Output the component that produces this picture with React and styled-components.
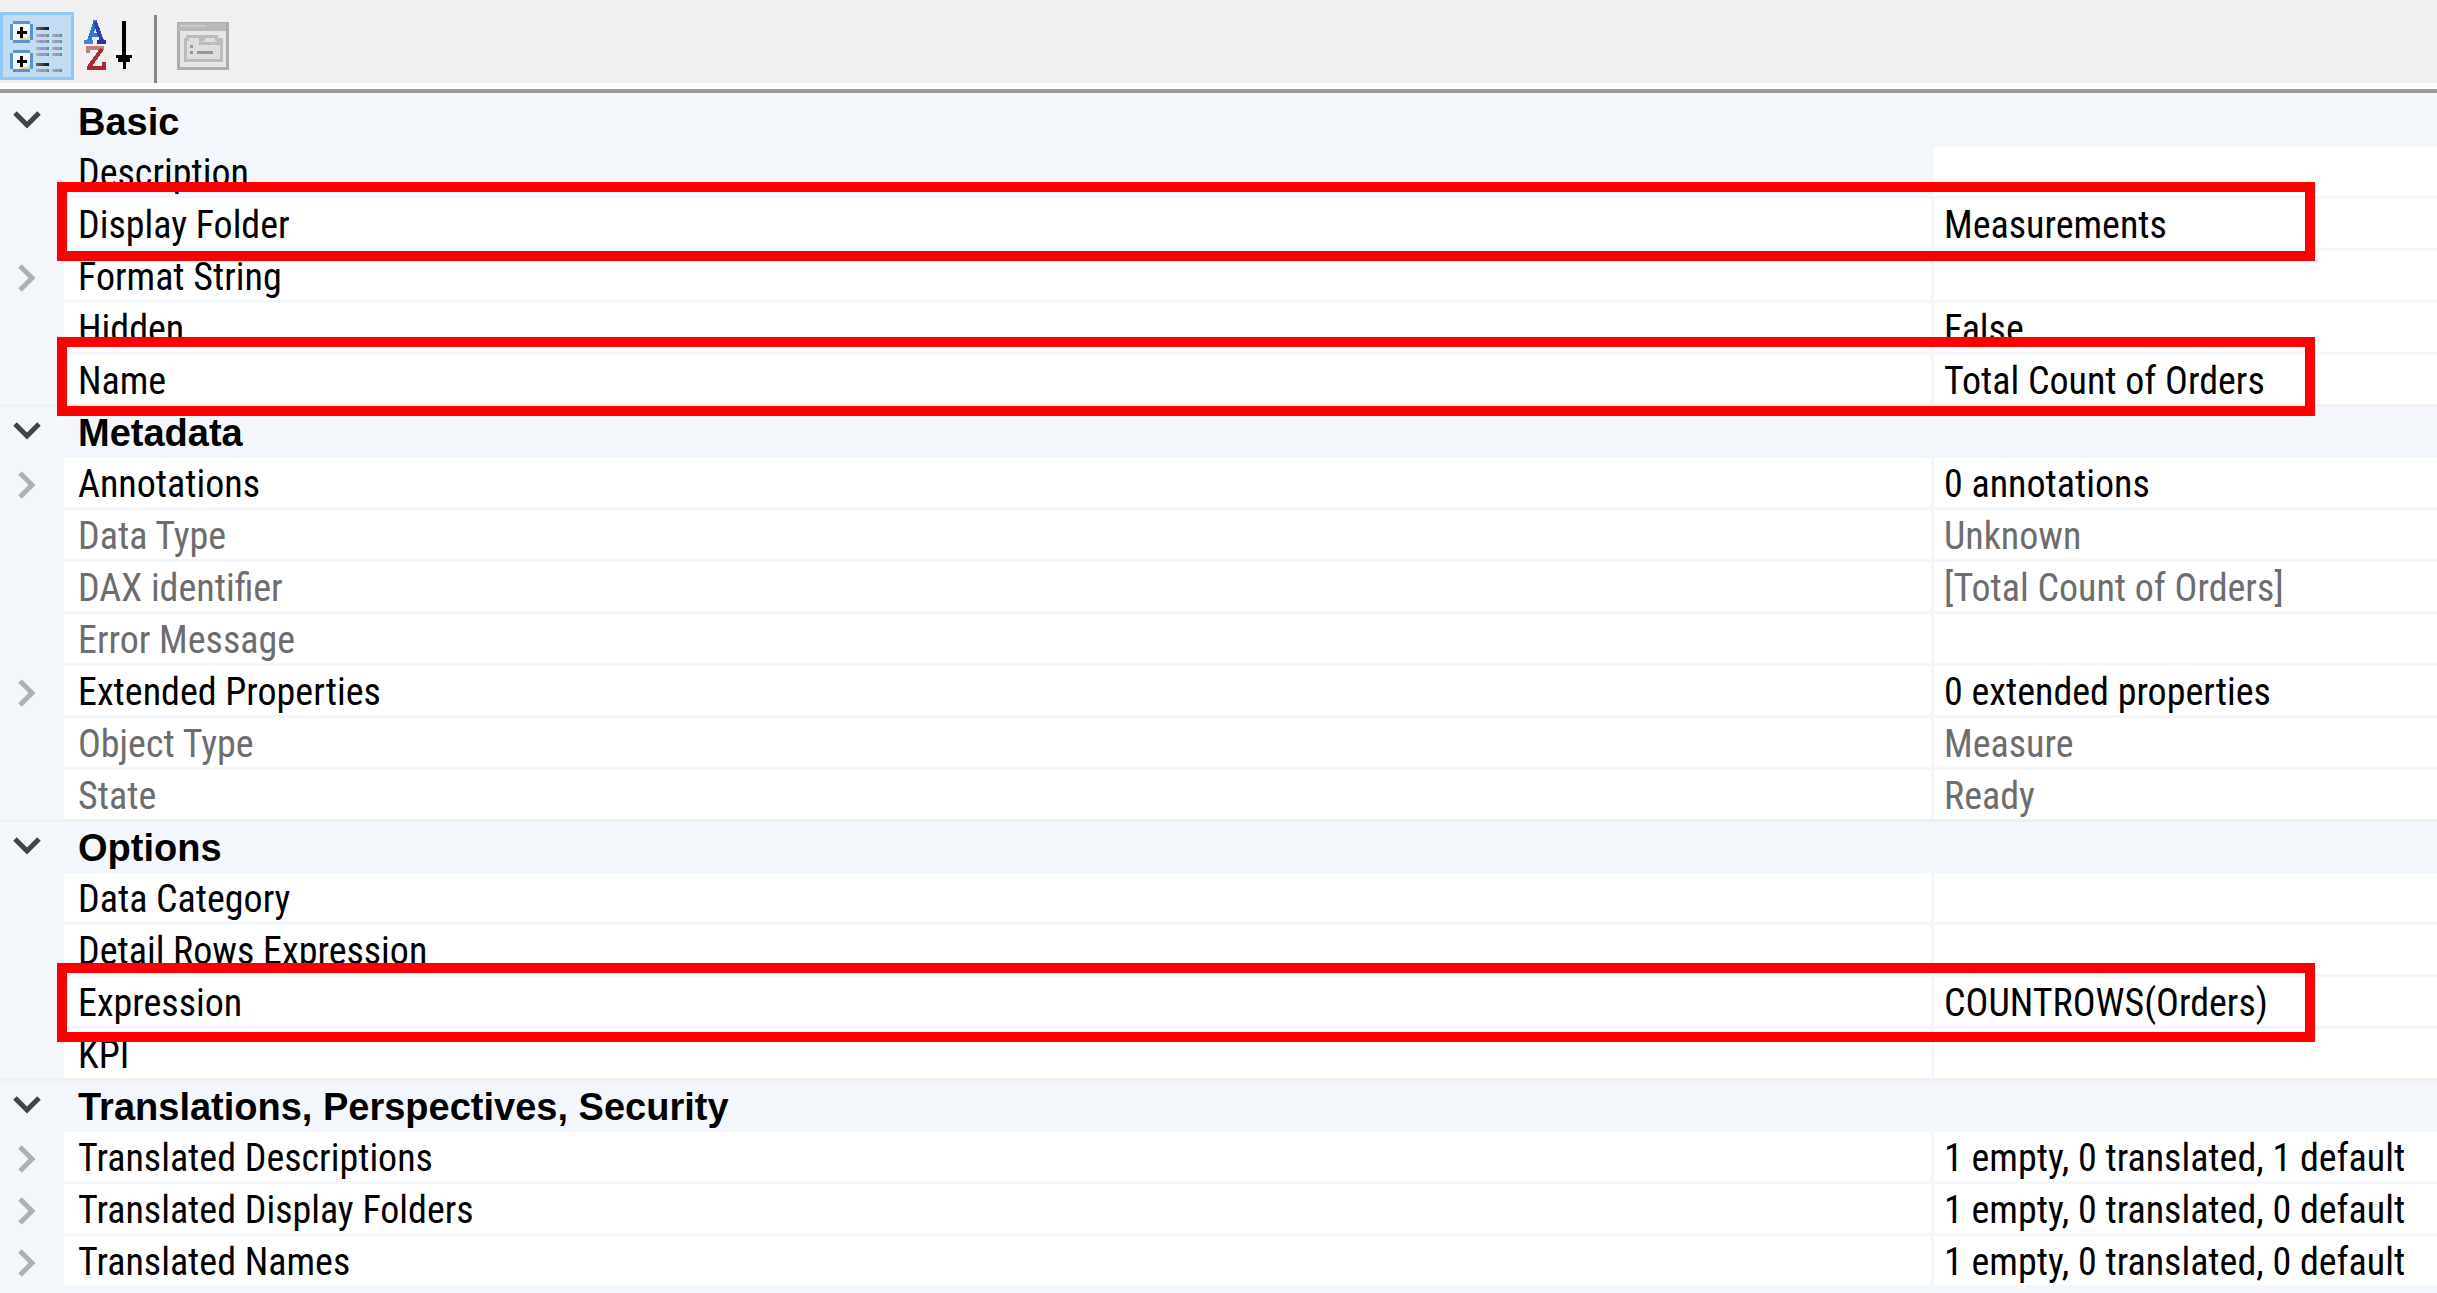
import React, { useState } from "react";
import styled, { createGlobalStyle, css } from "styled-components";

const GlobalStyle = createGlobalStyle`
  *, *::before, *::after { box-sizing: border-box; }
  body {
    margin: 0;
    background: #f3f7fc;
    font-family: "Roboto Condensed", "Liberation Sans", sans-serif;
    color: #000;
  }
`;

const Toolbar = styled.header`
  display: flex;
  align-items: flex-start;
  height: 93px;
  padding-top: 12px;
  background: linear-gradient(#f0f0f0 83px, #f9fbfe 83px, #fff 89px);
  border-bottom: 4px solid #9a9a9a;
`;

const ToolButton = styled.button`
  display: flex;
  align-items: center;
  justify-content: center;
  width: 74px;
  height: 68px;
  padding: 0;
  border: 3px solid ${(p) => (p.$active ? "#90c8f8" : "transparent")};
  background: ${(p) => (p.$active ? "#c2dcf3" : "transparent")};

  svg {
    display: block;
    shape-rendering: crispEdges;
  }
`;

const ToolDivider = styled.span`
  width: 3px;
  height: 68px;
  margin: 3px 9px 0 6px;
  background: #868686;
`;

const Grid = styled.table`
  width: 100%;
  table-layout: fixed;
  border-collapse: separate;
  border-spacing: 0;

  col.gutter { width: 64px; }
  col.value { width: 506px; }
`;

const CategoryRow = styled.tr`
  height: 51px;

  th {
    padding: 0;
    border-top: 3px solid ${(p) => (p.$first ? "#f3f7fc" : "#f0f0f0")};
    background: #f3f7fc;
  }
`;

const CategoryTitle = styled.th`
  && { padding: 4px 0 0 14px; }
  font: bold 38px/44px "Liberation Sans", Arial, sans-serif;
  text-align: left;
  white-space: nowrap;
`;

const cell = css`
  height: 52px;
  padding: 4px 0 0 14px;
  border-top: 3px solid #f3f7fc;
  background: ${(p) => (p.$selected ? "#f3f7fc" : "#fff")};
  color: ${(p) => (p.$readOnly ? "#6d6d6d" : "#000")};
  font-size: 38px;
  font-weight: 400;
  line-height: 45px;
  text-align: left;
  white-space: nowrap;
`;

const PropertyRow = styled.tr`
  position: relative;
`;

const GutterCell = styled.td`
  padding: 0;
  border-top: 3px solid #f3f7fc;
  background: #f3f7fc;
`;

const LabelCell = styled.th`
  ${cell}
`;

const ValueCell = styled.td`
  ${cell}
  padding-left: 10px;
  border-left: 3px solid #f3f7fc;
`;

const Highlight = styled.span`
  position: absolute;
  z-index: 1;
  top: ${(p) => -p.$lift}px;
  left: 57px;
  right: 122px;
  height: 79px;
  border: 10px solid #f00;
  pointer-events: none;
`;

const Expander = styled.button`
  display: flex;
  align-items: center;
  justify-content: center;
  width: 54px;
  height: 48px;
  padding: 2px 0 0;
  border: 0;
  background: none;
  color: ${(p) => (p.$open ? "#444" : "#b0b0b0")};
`;

function Chevron({ open }) {
  return (
    <svg width="32" height="32" viewBox="0 0 32 32" fill="none" stroke="currentColor" strokeWidth="5">
      <path d={open ? "M4 8 L16 20 L28 8" : "M9 5 L21 17 L9 29"} />
    </svg>
  );
}

function PlusBox({ y }) {
  return (
    <g transform={`translate(0 ${y})`}>
      <rect x="3" y="3" width="17" height="17" fill="#f6f6f6" />
      <path d="M10 20h10v-7l-3 4h-7z" fill="#ddd9a4" />
      <path d="M3 0h17v3H3zM3 19h17v3H3zM0 3h3v16H0zM20 3h3v16h-3z" fill="#5b93cf" />
      <path d="M10 6h3v4h4v3h-4v4h-3v-4H7v-3h3z" fill="#000" />
    </g>
  );
}

function CategorizedIcon() {
  const lines = [13, 19, 26, 32, 48];
  return (
    <svg width="54" height="54" viewBox="0 0 54 54">
      <defs>
        <linearGradient id="ink">
          <stop offset="0" stopColor="#b8b4a8" />
          <stop offset="0.45" stopColor="#8f8fd0" />
          <stop offset="0.7" stopColor="#a3a3ae" />
          <stop offset="1" stopColor="#3f8f80" />
        </linearGradient>
        <linearGradient id="heading">
          <stop offset="0" stopColor="#6b6b6b" />
          <stop offset="1" stopColor="#111" />
        </linearGradient>
      </defs>
      <PlusBox y={2} />
      <PlusBox y={31} />
      <rect x="26" y="8" width="13" height="3" fill="url(#heading)" />
      <rect x="26" y="44" width="13" height="3" fill="url(#heading)" />
      {lines.map((y) => (
        <g key={y} fill="url(#ink)">
          <rect x="26" y={y + 2} width="13" height="3" />
          <rect x="42" y={y + 2} width="10" height="3" />
        </g>
      ))}
    </svg>
  );
}

function SortIcon() {
  return (
    <svg width="54" height="54" viewBox="0 0 54 54">
      <g fill="none" strokeWidth="4">
        <path d="M5 22 L11 4 M7 16 H16" stroke="#3474d4" />
        <path d="M9 3 H13" stroke="#3474d4" />
        <path d="M11 3 L18 22" stroke="#3040b0" />
        <path d="M0 23 H9" stroke="#4a80d8" />
        <path d="M13 23 H22" stroke="#3030a0" />
        <path d="M4 34 V29 H20" stroke="#c08080" />
        <path d="M18 30 L5 48" stroke="#b02c34" />
        <path d="M3 49 H20 V43" stroke="#a82830" />
      </g>
      <path d="M30 32h20v6H30z" fill="#fff" />
      <path d="M38 2h4v34h6v3h-2v4h-4v7h-3v-7h-5v-4h-2v-3h6z" fill="#000" />
    </svg>
  );
}

function PropertyPagesIcon() {
  return (
    <svg width="52" height="48" viewBox="0 0 52 48">
      <rect width="52" height="48" fill="#adadad" />
      <rect x="1" y="1" width="48" height="8" fill="#b9b9b9" />
      <rect x="3" y="3" width="26" height="2" fill="#cacaca" />
      <rect x="3" y="9" width="46" height="36" fill="#e6e6e6" />
      <path d="M8 17h2v-3h13v3h3v-3h13v3h5v21H8z" fill="#dedede" stroke="#bcbcbc" strokeWidth="3" />
      <path d="M23 15v6h18v-4" fill="none" stroke="#bcbcbc" strokeWidth="3" />
      <path d="M13 23h3v3h-3zM13 29h3v3h-3zM20 29h16v3H20z" fill="#979797" />
    </svg>
  );
}

const categories = [
  {
    title: "Basic",
    rows: [
      { label: "Description", value: "", selected: true },
      { label: "Display Folder", value: "Measurements", lift: 14 },
      { label: "Format String", value: "", expandable: true },
      { label: "Hidden", value: "False" },
      { label: "Name", value: "Total Count of Orders", lift: 15 },
    ],
  },
  {
    title: "Metadata",
    rows: [
      { label: "Annotations", value: "0 annotations", expandable: true },
      { label: "Data Type", value: "Unknown", readOnly: true },
      { label: "DAX identifier", value: "[Total Count of Orders]", readOnly: true },
      { label: "Error Message", value: "", readOnly: true },
      { label: "Extended Properties", value: "0 extended properties", expandable: true },
      { label: "Object Type", value: "Measure", readOnly: true },
      { label: "State", value: "Ready", readOnly: true },
    ],
  },
  {
    title: "Options",
    rows: [
      { label: "Data Category", value: "" },
      { label: "Detail Rows Expression", value: "" },
      { label: "Expression", value: "COUNTROWS(Orders)", lift: 11 },
      { label: "KPI", value: "" },
    ],
  },
  {
    title: "Translations, Perspectives, Security",
    rows: [
      { label: "Translated Descriptions", value: "1 empty, 0 translated, 1 default", expandable: true },
      { label: "Translated Display Folders", value: "1 empty, 0 translated, 0 default", expandable: true },
      { label: "Translated Names", value: "1 empty, 0 translated, 0 default", expandable: true },
    ],
  },
];

function Category({ title, rows, first }) {
  const [open, setOpen] = useState(true);
  return (
    <tbody>
      <CategoryRow $first={first}>
        <th>
          <Expander $open={open} aria-expanded={open} aria-label={title} onClick={() => setOpen(!open)}>
            <Chevron open={open} />
          </Expander>
        </th>
        <CategoryTitle colSpan={2} scope="rowgroup">{title}</CategoryTitle>
      </CategoryRow>
      {open && rows.map((row) => <Property key={row.label} {...row} />)}
    </tbody>
  );
}

function Property({ label, value, expandable, readOnly, selected, lift }) {
  return (
    <PropertyRow>
      <GutterCell>
        {expandable && (
          <Expander aria-expanded={false} aria-label={label}>
            <Chevron />
          </Expander>
        )}
        {lift && <Highlight $lift={lift} />}
      </GutterCell>
      <LabelCell scope="row" $readOnly={readOnly} $selected={selected}>{label}</LabelCell>
      <ValueCell $readOnly={readOnly}>{value}</ValueCell>
    </PropertyRow>
  );
}

export default function App() {
  return (
    <>
      <GlobalStyle />
      <Toolbar role="toolbar" aria-label="Properties">
        <ToolButton $active aria-pressed="true" aria-label="Categorized"><CategorizedIcon /></ToolButton>
        <ToolButton aria-label="Alphabetical"><SortIcon /></ToolButton>
        <ToolDivider />
        <ToolButton disabled aria-label="Property Pages"><PropertyPagesIcon /></ToolButton>
      </Toolbar>
      <Grid>
        <colgroup>
          <col className="gutter" />
          <col />
          <col className="value" />
        </colgroup>
        {categories.map((c, i) => <Category key={c.title} {...c} first={i === 0} />)}
      </Grid>
    </>
  );
}
